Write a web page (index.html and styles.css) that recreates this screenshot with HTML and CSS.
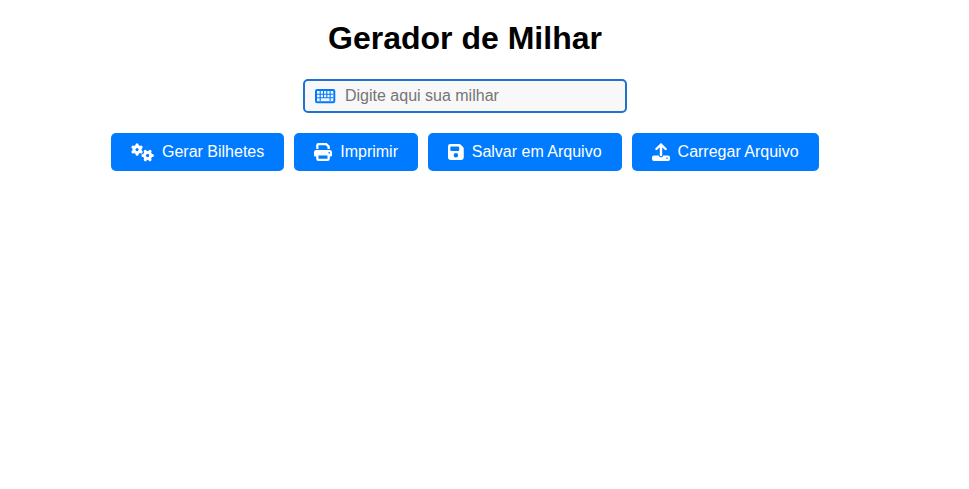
FILE: index.html
```html
<!DOCTYPE html>
<html lang="pt-BR">
<head>
<meta charset="utf-8">
<title>Gerador de Milhar</title>
<link rel="stylesheet" href="styles.css">
</head>
<body>
<main class="page">
  <h1 class="title">Gerador de Milhar</h1>
  <label class="field">
    <svg class="field-icon" viewBox="0 0 20 18"><rect x="1" y="3" width="18.300" height="12.200" rx="1.200" fill="none" stroke="currentColor" stroke-width="2"/><path fill="none" stroke="currentColor" stroke-width="1.100" d="M2 7.200H18M2 10.800H18M5.200 4V14M8.500 4V10.800M11.800 4V10.800M15.100 4V14"/></svg>
    <input class="input" type="text" placeholder="Digite aqui sua milhar">
  </label>
  <div class="actions">
    <button class="button">
      <svg class="icon icon-gears" viewBox="0 0 23 18">
        <g id="gear" fill="none" stroke="currentColor"><circle cx="6.200" cy="6.500" r="3.200" stroke-width="3"/><path stroke-width="3.200" stroke-linecap="round" d="M6.200 1.700V3M6.200 10V11.300M2.040 4.100L3.200 4.800M9.200 8.200L10.360 8.900M2.040 8.900L3.200 8.200M9.200 4.800L10.360 4.100"/></g>
        <use href="#gear" transform="translate(23.500 6.400) rotate(90)"/>
      </svg>Gerar Bilhetes
    </button>
    <button class="button">
      <svg class="icon" viewBox="0 0 18 18"><path fill="currentColor" fill-rule="evenodd" d="M4.500 0H12.700L15.800 3V6H13.500V4L11.800 2.300H4.500V6H2.200V2.300Q2.200 0 4.500 0ZM2.200 7H15.800Q18 7 18 9.200V12.400Q18 13.500 16.900 13.500H15.800V15.800Q15.800 18 13.500 18H4.500Q2.200 18 2.200 15.800V13.500H1.100Q0 13.500 0 12.400V9.200Q0 7 2.200 7ZM4.500 12.400V15.800H13.500V12.400ZM15.200 8.900A.85 .85 0 1 0 15.200 10.600A.85 .85 0 1 0 15.200 8.900Z"/></svg>Imprimir
    </button>
    <button class="button">
      <svg class="icon icon-save" viewBox="0 0 15.750 18"><path fill="currentColor" fill-rule="evenodd" d="M2.250 1.100H11.200Q12.100 1.100 12.800 1.800L15.100 4.100Q15.750 4.800 15.750 5.700V14.600Q15.750 16.900 13.500 16.900H2.250Q0 16.900 0 14.600V3.400Q0 1.100 2.250 1.100ZM3.400 3.400Q2.300 3.400 2.300 4.500V6.700Q2.300 7.900 3.400 7.900H10.100Q11.200 7.900 11.200 6.700V4.500Q11.200 3.400 10.100 3.400ZM7.900 10.100A2.250 2.250 0 1 0 7.900 14.600A2.250 2.250 0 1 0 7.900 10.100Z"/></svg>Salvar em Arquivo
    </button>
    <button class="button">
      <svg class="icon" viewBox="0 0 18 18"><path fill="none" stroke="currentColor" stroke-width="2.400" stroke-linecap="round" stroke-linejoin="round" d="M9 12V1.500M4.400 6L9 1.500L13.600 6"/><path fill="currentColor" fill-rule="evenodd" d="M2 12.400H6.800Q7.300 14.300 9 14.300T11.200 12.400H16Q18 12.400 18 14.300V16.100Q18 18 16 18H2Q0 18 0 16.100V14.300Q0 12.400 2 12.400ZM15 14.400A.8 .8 0 1 0 15 16A.8 .8 0 1 0 15 14.400Z"/></svg>Carregar Arquivo
    </button>
  </div>
</main>
</body>
</html>
```
FILE: styles.css
```css
* { box-sizing: border-box; }
body {
  margin: 0;
  background: #fff;
  color: #000;
  font-family: "Liberation Sans", Arial, sans-serif;
}
.page {
  width: 930px;
  padding-top: 20px;
  display: flex;
  flex-direction: column;
  align-items: center;
}
.title {
  margin: 0 0 22px;
  font-size: 32px;
  line-height: 37px;
}
.field {
  display: flex;
  align-items: center;
  gap: 10px;
  width: 324px;
  height: 34px;
  padding: 0 10px;
  border: 2px solid #1f73cf;
  border-radius: 5px;
  background: #f8f8f8;
}
.field-icon {
  flex: none;
  width: 20px;
  height: 18px;
  overflow: visible;
  color: #007bff;
}
.input {
  flex: 1;
  min-width: 0;
  padding: 0;
  border: 0;
  outline: 0;
  background: transparent;
  font: 16px "Liberation Sans", Arial, sans-serif;
}
.input::placeholder { color: #757575; }
.actions {
  display: flex;
  gap: 10px;
  margin-top: 20px;
}
.button {
  display: flex;
  align-items: center;
  gap: 8px;
  height: 38px;
  padding: 0 20px;
  border: 0;
  border-radius: 5px;
  background: #007bff;
  color: #fff;
  font: 16px "Liberation Sans", Arial, sans-serif;
}
.icon {
  flex: none;
  width: 18px;
  height: 18px;
}
.icon-gears { width: 22.5px; overflow: visible; }
.icon-save { width: 15.75px; }
```
